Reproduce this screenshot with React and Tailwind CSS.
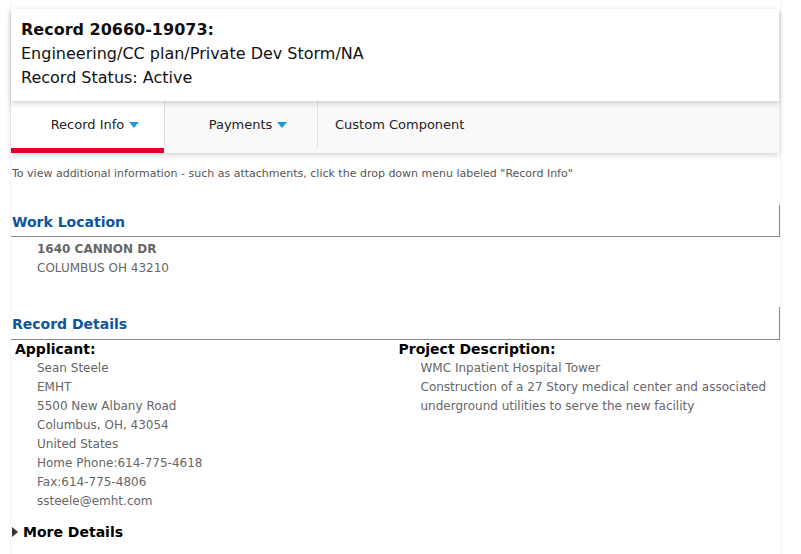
import React from "react";

const Caret = () => (
  <svg width="10" height="6" viewBox="0 0 10 6" className="ml-[5px] inline-block">
    <path d="M0 0 L10 0 L5 6 Z" fill="#1d9ad6" />
  </svg>
);

const App = () => {
  const applicant = [
    "Sean Steele",
    "EMHT",
    "5500 New Albany Road",
    "Columbus, OH, 43054",
    "United States",
    "Home Phone:614-775-4618",
    "Fax:614-775-4806",
    "ssteele@emht.com",
  ];

  return (
    <div className="min-h-screen bg-white font-['Tahoma','DejaVu_Sans',sans-serif]">
      <div className="ml-[10px] w-[771px] border-x border-[#f4f4f4] min-h-[554px]">
        {/* header card */}
        <div className="pt-[9px] pr-px">
          <div className="bg-white shadow-[0_2px_6px_rgba(0,0,0,0.18)]">
            <div className="relative z-10 bg-white pl-[10px] pt-[9px] pb-[11px] shadow-[0_3px_5px_rgba(0,0,0,0.15)] text-[#111]">
              <div className="text-[16px] font-bold leading-[24px]">Record 20660-19073:</div>
              <div className="text-[16px] leading-[24px]">Engineering/CC plan/Private Dev Storm/NA</div>
              <div className="text-[16px] leading-[24px]">Record Status: Active</div>
            </div>
            <div className="flex h-[52px] bg-[#f9f9f9] text-[13px] text-[#222]">
              <div className="w-[153px] flex items-center justify-center pl-[15px] bg-white border-b-[5px] border-[#e4002b]">
                Record Info
                <Caret />
              </div>
              <div className="w-[154px] flex items-center justify-center pl-[14px] border-l border-r border-[#e2e2e2] mb-[5px]">
                Payments
                <Caret />
              </div>
              <div className="flex items-center pl-[17px] pb-[5px]">Custom Component</div>
            </div>
          </div>
        </div>

        <p className="mt-[13px] pl-px text-[11px] text-[#555]">
          To view additional information - such as attachments, click the drop down menu labeled "Record Info"
        </p>

        {/* work location */}
        <div className="mt-[22px] h-[32px] flex items-end pb-[3px] pl-px border-b border-r border-[#888]">
          <h2 className="text-[14px] font-bold text-[#0e559e]">Work Location</h2>
        </div>
        <div className="pl-[26px] pt-[3px] text-[12px] leading-[19px] text-[#666]">
          <div className="font-bold">1640 CANNON DR</div>
          <div>COLUMBUS OH 43210</div>
        </div>

        {/* record details */}
        <div className="mt-[29px] h-[33px] flex items-end pb-[4px] pl-px border-b border-r border-[#888]">
          <h2 className="text-[14px] font-bold text-[#0e559e]">Record Details</h2>
        </div>
        <div className="grid grid-cols-2">
          <div className="pl-[4px]">
            <div className="text-[14px] font-bold leading-[19px] text-black">Applicant:</div>
            <div className="pl-[22px] text-[12px] leading-[19px] text-[#666]">
              {applicant.map((line) => (
                <div key={line}>{line}</div>
              ))}
            </div>
          </div>
          <div className="pl-[3px]">
            <div className="text-[14px] font-bold leading-[19px] text-black">Project Description:</div>
            <div className="pl-[22px] text-[12px] leading-[19px] text-[#666]">
              <div>WMC Inpatient Hospital Tower</div>
              <div>Construction of a 27 Story medical center and associated underground utilities to serve the new facility</div>
            </div>
          </div>
        </div>

        <div className="mt-[11px] flex items-center pl-px">
          <svg width="6" height="10" viewBox="0 0 6 10" className="mr-[5px]">
            <path d="M0 0 L6 5 L0 10 Z" fill="#333" />
          </svg>
          <span className="text-[14px] font-bold text-black">More Details</span>
        </div>
      </div>
    </div>
  );
};

export default App;
